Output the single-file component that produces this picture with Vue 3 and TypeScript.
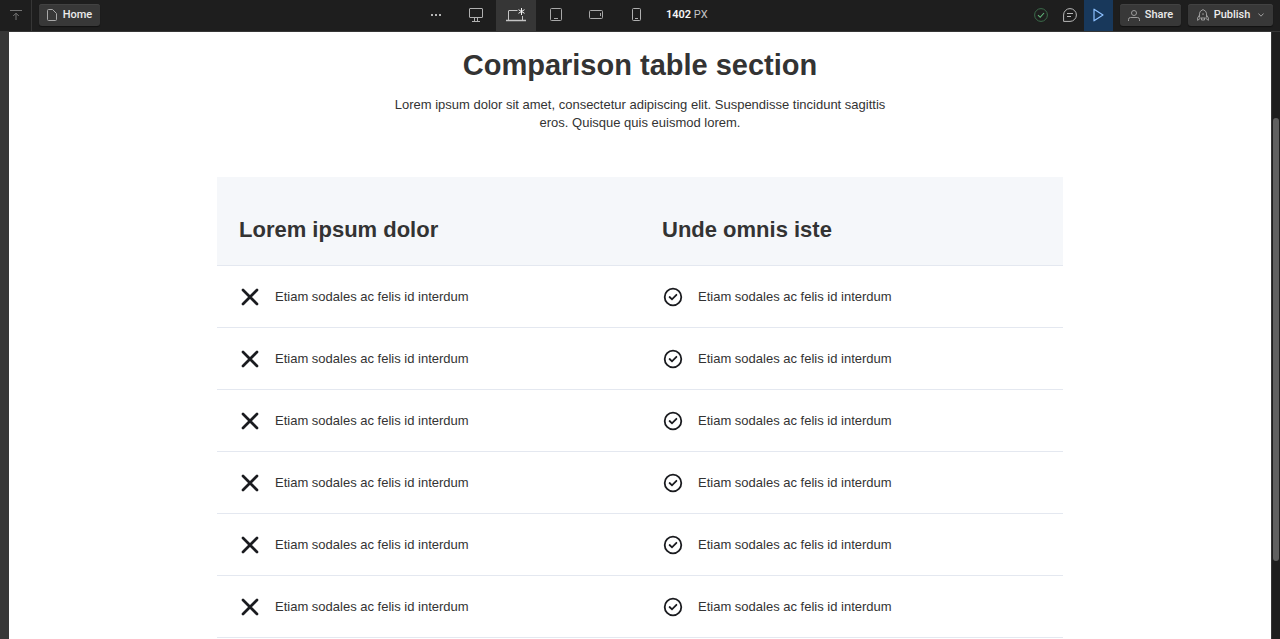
<script setup lang="ts">
interface Row {
  without: string
  withIt: string
}

const text = 'Etiam sodales ac felis id interdum'
const rows: Row[] = Array.from({ length: 6 }, () => ({ without: text, withIt: text }))
</script>

<template>
  <div class="designer">
    <header class="toolbar">
      <div class="group">
        <button class="tool up" type="button" aria-label="Go to parent">
          <svg width="12" height="10" viewBox="0 0 12 10" fill="none" stroke="#757575">
            <path d="M0 0.5H12M6 10V3.2M3.2 6L6 3.2L8.8 6" />
          </svg>
        </button>
        <button class="pill home" type="button">
          <svg width="10" height="12" viewBox="0 0 10 12" fill="none" stroke="#a8a8a8">
            <path d="M1.5 0.5H5.5L9.5 4.5V10.5Q9.5 11.5 8.5 11.5H1.5Q0.5 11.5 0.5 10.5V1.5Q0.5 0.5 1.5 0.5Z" />
          </svg>
          Home
        </button>
      </div>

      <nav class="breakpoints" aria-label="Breakpoints">
        <button class="tool wide" type="button" aria-label="More">
          <svg width="10" height="2" viewBox="0 0 10 2" fill="#b4b4b4">
            <path d="M0 0H2V2H0ZM4 0H6V2H4ZM8 0H10V2H8Z" />
          </svg>
        </button>
        <button class="tool wide" type="button" aria-label="Large desktop">
          <svg width="14" height="14" viewBox="0 0 14 14" fill="none" stroke="#b0b0b0">
            <rect x="0.5" y="0.5" width="13" height="9" rx="0.5" />
            <path d="M5.5 10V13M8.5 10V13M3 13.5H11" />
          </svg>
        </button>
        <button class="tool wide active" type="button" aria-label="Desktop">
          <svg width="20" height="14" viewBox="0 0 20 14" fill="none" stroke="#c4c4c4">
            <path d="M0 12.5H20" stroke-width="1.5" />
            <path d="M2.5 12V3Q2.5 2.5 3 2.5H11.5M16.5 8V12" />
            <path d="M15.5 0V7M12.5 1.7L18.5 5.3M12.5 5.3L18.5 1.7" stroke="#f2f2f2" />
          </svg>
        </button>
        <button class="tool wide" type="button" aria-label="Tablet">
          <svg width="12" height="13" viewBox="0 0 12 13" fill="none" stroke="#a8a8a8">
            <rect x="0.5" y="0.5" width="11" height="12" rx="1" />
            <path d="M4 10.5H8" />
          </svg>
        </button>
        <button class="tool wide" type="button" aria-label="Mobile landscape">
          <svg width="14" height="9" viewBox="0 0 14 9" fill="none" stroke="#a8a8a8">
            <rect x="0.5" y="0.5" width="13" height="8" rx="1" />
            <path d="M11.5 3V6" />
          </svg>
        </button>
        <button class="tool wide" type="button" aria-label="Mobile portrait">
          <svg width="9" height="13" viewBox="0 0 9 13" fill="none" stroke="#b0b0b0">
            <rect x="0.5" y="0.5" width="8" height="12" rx="1" />
            <path d="M3 10.5H6" />
          </svg>
        </button>
        <span class="size"><strong>1402</strong> PX</span>
      </nav>

      <div class="group end">
        <button class="tool narrow" type="button" aria-label="Changes saved">
          <svg width="14" height="14" viewBox="0 0 14 14" fill="none">
            <circle cx="7" cy="7" r="6.4" stroke="#3b6b4a" />
            <path d="M4 7.2L6.2 9.3L10 5" stroke="#63b87b" stroke-width="1.1" />
          </svg>
        </button>
        <button class="tool narrow" type="button" aria-label="Comments">
          <svg width="14" height="14" viewBox="0 0 14 14" fill="none" stroke="#b8b8b8">
            <path d="M0.6 13.4V7A6.4 6.4 0 1 1 7 13.4Z" />
            <path d="M4 5.5H10M4 8.5H8" />
          </svg>
        </button>
        <button class="tool narrow play" type="button" aria-label="Preview">
          <svg width="11" height="14" viewBox="0 0 11 14" fill="none" stroke="#8ec1ff" stroke-width="1.2">
            <path d="M1 1.2L10 7L1 12.8Z" stroke-linejoin="round" />
          </svg>
        </button>
        <button class="pill share" type="button">
          <svg width="12" height="11" viewBox="0 0 12 11" fill="none" stroke="#9c9c9c">
            <circle cx="6" cy="3" r="2.5" />
            <path d="M0.5 11V9.5Q0.5 7.5 2.5 7.5H9.5Q11.5 7.5 11.5 9.5V11" />
          </svg>
          Share
        </button>
        <button class="pill publish" type="button">
          <svg width="12" height="12" viewBox="0 0 12 12" fill="none" stroke="#9c9c9c">
            <path d="M2.5 8.5V4.2Q2.8 1.8 6 0.6Q9.2 1.8 9.5 4.2V8.5" />
            <path d="M2.5 6L0.6 9V11.4L3.6 9H8.4L11.4 11.4V9L9.5 6M4.5 9V11H7.5V9" />
            <path d="M6 4.2V6" />
          </svg>
          Publish
          <svg class="chevron" width="6" height="4" viewBox="0 0 6 4" fill="none" stroke="#a0a0a0">
            <path d="M0.4 0.5L3 3.2L5.6 0.5" />
          </svg>
        </button>
      </div>
    </header>

    <div class="workspace">
      <main class="canvas">
        <section class="comparison">
          <h1>Comparison table section</h1>
          <p class="intro">
            Lorem ipsum dolor sit amet, consectetur adipiscing elit. Suspendisse tincidunt sagittis eros.
            Quisque quis euismod lorem.
          </p>
          <table>
            <thead>
              <tr>
                <th scope="col">Lorem ipsum dolor</th>
                <th scope="col">Unde omnis iste</th>
              </tr>
            </thead>
            <tbody>
              <tr v-for="(row, i) in rows" :key="i">
                <td>
                  <div class="feature">
                    <svg width="22" height="22" viewBox="0 0 22 22" fill="none" stroke="#1a1b1f" aria-hidden="true">
                      <path d="M4 4L18 18M18 4L4 18" stroke-width="2.7" stroke-linecap="round" />
                    </svg>
                    {{ row.without }}
                  </div>
                </td>
                <td>
                  <div class="feature">
                    <svg width="22" height="22" viewBox="0 0 22 22" fill="none" stroke="#1a1b1f" aria-hidden="true">
                      <circle cx="11" cy="11" r="8.3" stroke-width="1.8" />
                      <path d="M7.6 11L10 13.3L14.4 8.8" stroke-width="1.8" stroke-linecap="round" />
                    </svg>
                    {{ row.withIt }}
                  </div>
                </td>
              </tr>
            </tbody>
          </table>
        </section>
      </main>
      <div class="scroll-track"><div class="scroll-thumb"></div></div>
    </div>
  </div>
</template>

<style>
body {
  margin: 0;
}
</style>

<style scoped>
.designer {
  display: flex;
  flex-direction: column;
  height: 100vh;
  overflow: hidden;
  background: #373737;
}

.toolbar {
  flex: none;
  display: grid;
  grid-template-columns: 1fr minmax(auto, 448px) 1fr;
  height: 31px;
  background: #1e1e1e;
  border-bottom: 1px solid #363636;
  color: #ebebeb;
  font: 500 11px/16px Roboto, Inter, sans-serif;
}

.group,
.breakpoints {
  display: flex;
  align-items: center;
}

.end {
  justify-content: flex-end;
  padding-right: 7px;
}

button {
  display: flex;
  align-items: center;
  justify-content: center;
  box-sizing: border-box;
  margin: 0;
  padding: 0;
  border: 0;
  background: none;
  color: inherit;
  font: inherit;
}

svg {
  flex: none;
}

.tool {
  height: 31px;
  padding-bottom: 2px;
}

.up {
  width: 32px;
  border-right: 1px solid #363636;
}

.wide {
  width: 40px;
}

.narrow {
  width: 29px;
}

.active {
  background: #363636;
}

.play {
  background: #18385b;
}

.pill {
  height: 22px;
  margin: 0 0 1px 7px;
  border-radius: 3px;
  background: #383838;
  box-shadow: inset 0 1px 0 #424242, 0 1px 1px #111;
}

.home {
  width: 61px;
  gap: 6px;
}

.share {
  width: 61px;
  gap: 5px;
}

.publish {
  width: 85px;
  gap: 5px;
}

.chevron {
  margin-left: 3px;
}

.size {
  margin: 0 0 1px 10px;
  white-space: nowrap;
  font-weight: 400;
  color: #c4c4c4;
}

.size strong {
  font-weight: 600;
  color: #f5f5f5;
}

.workspace {
  flex: 1;
  display: flex;
  min-height: 0;
  padding-left: 9px;
}

.canvas {
  flex: 1;
  overflow: hidden;
  background: #fff;
  color: #333;
  font: 13px/18px "Liberation Sans", Arial, sans-serif;
}

.comparison {
  max-width: 846px;
  margin: 0 auto;
}

h1 {
  margin: 14px 0 12px;
  text-align: center;
  font-size: 29px;
  line-height: 38px;
}

.intro {
  max-width: 510px;
  margin: 0 auto 45px;
  text-align: center;
}

table {
  width: 100%;
  table-layout: fixed;
  border-collapse: separate;
  border-spacing: 0;
}

th,
td {
  box-sizing: border-box;
  padding: 0 22px;
  border-bottom: 1px solid #e4e8f0;
  text-align: left;
}

th {
  height: 89px;
  padding-top: 18px;
  background: #f5f7fa;
  font-size: 22px;
  line-height: 28px;
}

td {
  height: 62px;
}

.feature {
  display: flex;
  align-items: center;
  gap: 14px;
}

.scroll-track {
  flex: none;
  box-sizing: border-box;
  width: 9px;
  padding: 86px 1px 0;
  border-left: 1px solid #363636;
  background: #1e1e1e;
}

.scroll-thumb {
  height: 85%;
  border-radius: 3px;
  background: #606060;
}
</style>
